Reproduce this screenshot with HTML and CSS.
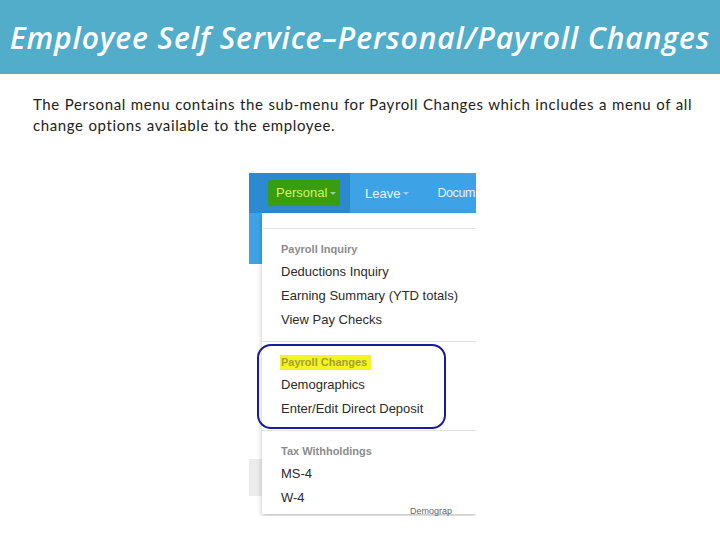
FILE: index.html
```html
<!DOCTYPE html>
<html>
<head>
<meta charset="utf-8">
<link rel="stylesheet" href="styles.css">
</head>
<body>
<header class="banner">
  <h1 class="title">Employee Self Service–Personal/Payroll Changes</h1>
</header>
<p class="intro">The Personal menu contains the sub-menu for Payroll Changes which includes a menu of all change options available to the employee.</p>
<div class="shot">
  <nav class="nav">
    <div class="tab tab-active"><span class="marker">Personal<span class="caret"></span></span></div>
    <div class="tab">Leave<span class="caret"></span></div>
    <div class="tab tab-last">Docum</div>
  </nav>
  <div class="below">
    <div class="side">
      <div class="side-blue"></div>
      <div class="side-gap"></div>
      <div class="side-gray"></div>
    </div>
    <div class="menu">
      <div class="menu-top"></div>
      <div class="group">
        <div class="ghead">Payroll Inquiry</div>
        <div class="item">Deductions Inquiry</div>
        <div class="item">Earning Summary (YTD totals)</div>
        <div class="item">View Pay Checks</div>
      </div>
      <div class="group">
        <div class="ghead"><span class="hl">Payroll Changes</span></div>
        <div class="item">Demographics</div>
        <div class="item">Enter/Edit Direct Deposit</div>
      </div>
      <div class="group last">
        <div class="ghead">Tax Withholdings</div>
        <div class="item">MS-4</div>
        <div class="item">W-4</div>
      </div>
    </div>
    <div class="ring"></div>
    <div class="peek">Demograp</div>
  </div>
</div>
</body>
</html>
```
FILE: styles.css
```css
html, body {
  margin: 0;
  padding: 0;
  background: #ffffff;
}
.banner {
  height: 74px;
  background: #51adc9;
  display: flex;
  align-items: center;
  justify-content: center;
}
.title {
  margin: 0;
  color: #ffffff;
  font-family: "Open Sans", "Lato", sans-serif;
  font-style: italic;
  font-weight: 600;
  font-size: 30px;
  letter-spacing: 0.9px;
  white-space: nowrap;
}
.intro {
  margin: 20px 0 0 33px;
  width: 675px;
  font-family: "Lato", "Open Sans", sans-serif;
  font-size: 15px;
  line-height: 21px;
  color: #222;
  letter-spacing: 0.6px;
  word-spacing: 0.5px;
}
.shot {
  margin: 37px 0 0 249px;
  width: 227px;
  height: 343px;
  overflow: hidden;
  font-family: "Liberation Sans", Arial, sans-serif;
  position: relative;
}
.nav {
  height: 40px;
  background: #3ea3e6;
  display: flex;
  align-items: center;
}
.tab {
  flex: none;
  height: 40px;
  display: flex;
  align-items: center;
  color: #e6f3ff;
  font-size: 13px;
  padding: 0 15px 0 15px;
  white-space: nowrap;
}
.tab-last {
  padding: 0 0 0 13px;
  font-size: 12.5px;
  letter-spacing: -0.4px;
}
.tab-active {
  width: 101px;
  box-sizing: border-box;
  background: #2c8ad0;
  padding: 0 0 0 27px;
}
.marker {
  background: #3a9d10;
  color: #d8f25a;
  padding: 5px 4px 6px 8px;
  margin-left: -8px;
  border-radius: 3px 2px 4px 2px;
}
.caret {
  display: inline-block;
  width: 0;
  height: 0;
  border-left: 3px solid transparent;
  border-right: 3px solid transparent;
  border-top: 3px solid rgba(220, 235, 255, 0.6);
  margin-left: 3px;
  vertical-align: middle;
}
.below {
  display: flex;
  height: 303px;
  position: relative;
}
.side {
  width: 13px;
  display: flex;
  flex-direction: column;
  flex: none;
}
.side-blue {
  height: 51px;
  background: #3ea3e6;
}
.side-gap {
  height: 195px;
  background: #ffffff;
}
.side-gray {
  height: 37px;
  background: #ececec;
}
.menu {
  flex: 1;
  background: #fff;
  box-shadow: 0 2px 5px rgba(0, 0, 0, 0.25);
  height: 301px;
}
.menu-top {
  height: 15px;
  border-bottom: 1px solid #e2e2e2;
}
.group {
  padding: 9px 0 9px 19px;
  border-bottom: 1px solid #e2e2e2;
}
.group.last {
  border-bottom: none;
}
.ghead {
  font-size: 11px;
  font-weight: bold;
  color: #8c8c8c;
  line-height: 22px;
}
.hl {
  background: #f2f522;
  color: #a8a030;
  padding: 1px 4px 2px 1px;
  margin-left: -1px;
}
.item {
  font-size: 13px;
  color: #2b2b2b;
  line-height: 24px;
}
.ring {
  position: absolute;
  left: 8px;
  top: 131px;
  width: 185px;
  height: 81px;
  border: 2px solid #1b1b9a;
  border-radius: 14px;
}
.peek {
  position: absolute;
  right: 0;
  bottom: 0;
  font-size: 9px;
  line-height: 10px;
  color: #666;
  width: 66px;
  overflow: hidden;
}
```
